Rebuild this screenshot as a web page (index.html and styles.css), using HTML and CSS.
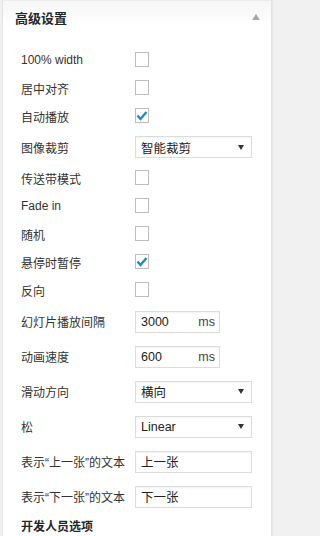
FILE: index.html
```html
<!DOCTYPE html>
<html lang="zh">
<head>
<meta charset="utf-8">
<title>高级设置</title>
<link rel="stylesheet" href="styles.css">
</head>
<body>
<div class="panel">
  <div class="panel-head">
    <h2 class="panel-title">高级设置</h2>
    <svg class="toggle" width="8" height="6" viewBox="0 0 8 6"><polygon points="4,0 8,6 0,6" fill="#a7a7a7"/></svg>
  </div>
  <div class="panel-body">
    <div class="row"><span class="label">100% width</span><span class="cb"></span></div>
    <div class="row"><span class="label">居中对齐</span><span class="cb"></span></div>
    <div class="row"><span class="label">自动播放</span><span class="cb checked"><svg width="12" height="12" viewBox="0 0 12 12"><polyline points="1.5,5.5 4.5,9 10.5,2" fill="none" stroke="#1e8cbe" stroke-width="2.4"/></svg></span></div>
    <div class="row row-select"><span class="label">图像裁剪</span><div class="select"><span>智能裁剪</span><svg width="6" height="5" viewBox="0 0 6 5"><polygon points="0,0 6,0 3,5" fill="#333"/></svg></div></div>
    <div class="row"><span class="label">传送带模式</span><span class="cb"></span></div>
    <div class="row"><span class="label">Fade in</span><span class="cb"></span></div>
    <div class="row"><span class="label">随机</span><span class="cb"></span></div>
    <div class="row"><span class="label">悬停时暂停</span><span class="cb checked"><svg width="12" height="12" viewBox="0 0 12 12"><polyline points="1.5,5.5 4.5,9 10.5,2" fill="none" stroke="#1e8cbe" stroke-width="2.4"/></svg></span></div>
    <div class="row"><span class="label">反向</span><span class="cb"></span></div>
    <div class="row row-field"><span class="label">幻灯片播放间隔</span><div class="num"><span>3000</span><span class="unit">ms</span></div></div>
    <div class="row row-field"><span class="label">动画速度</span><div class="num"><span>600</span><span class="unit">ms</span></div></div>
    <div class="row row-field"><span class="label">滑动方向</span><div class="select"><span>横向</span><svg width="6" height="5" viewBox="0 0 6 5"><polygon points="0,0 6,0 3,5" fill="#333"/></svg></div></div>
    <div class="row row-field"><span class="label">松</span><div class="select"><span>Linear</span><svg width="6" height="5" viewBox="0 0 6 5"><polygon points="0,0 6,0 3,5" fill="#333"/></svg></div></div>
    <div class="row row-field"><span class="label">表示“上一张”的文本</span><div class="text"><span>上一张</span></div></div>
    <div class="row row-field"><span class="label">表示“下一张”的文本</span><div class="text"><span>下一张</span></div></div>
    <div class="row row-head"><span class="label strong">开发人员选项</span></div>
  </div>
</div>
</body>
</html>
```

FILE: styles.css
```css
html, body {
  margin: 0;
  padding: 0;
  background: #f1f1f1;
}

body {
  font-family: "Liberation Sans", "Noto Sans CJK SC", sans-serif;
  font-size: 12px;
  color: #333;
}

.panel {
  box-sizing: border-box;
  width: 270px;
  min-height: 560px;
  margin-left: 2px;
  background: #fff;
  border: 1px solid #e2e2e2;
  border-top-color: #ececec;
  box-shadow: 1px 0 1px rgba(0, 0, 0, 0.04);
}

.panel-head {
  height: 35px;
  display: flex;
  align-items: center;
  justify-content: space-between;
  padding: 0 11px 0 12px;
  background: linear-gradient(to bottom, #f6f6f6, #ffffff 70%);
}

.panel-title {
  margin: 0;
  font-size: 13px;
  font-weight: bold;
  color: #23282d;
  padding-bottom: 2px;
}

.toggle {
  margin-top: -3px;
}

.panel-body {
  padding: 10px 0 0 18px;
}

.row {
  display: flex;
  align-items: center;
  height: 28px;
}

.row-select {
  height: 34px;
}

.row-field {
  height: 35px;
}

.row-head {
  height: 22px;
}

.label {
  width: 114px;
  flex: none;
  color: #333;
  white-space: nowrap;
  letter-spacing: 0;
}

.strong {
  font-weight: bold;
  color: #23282d;
}

.cb {
  box-sizing: border-box;
  width: 14px;
  height: 15px;
  border: 1px solid #bdbdbd;
  background: #fff;
  display: flex;
  align-items: center;
  justify-content: center;
  margin-top: -1px;
}

.select,
.text,
.num {
  box-sizing: border-box;
  height: 22px;
  border: 1px solid #dcdcdc;
  background: #fff;
  display: flex;
  align-items: center;
  justify-content: space-between;
  padding: 0 6px 0 5px;
  color: #222;
  font-size: 12.5px;
  box-shadow: inset 0 1px 2px rgba(0, 0, 0, 0.05);
}

.select {
  width: 117px;
  padding-right: 7px;
}

.text {
  width: 117px;
}

.num {
  width: 85px;
  padding-right: 4px;
}

.unit {
  color: #444;
}
```
